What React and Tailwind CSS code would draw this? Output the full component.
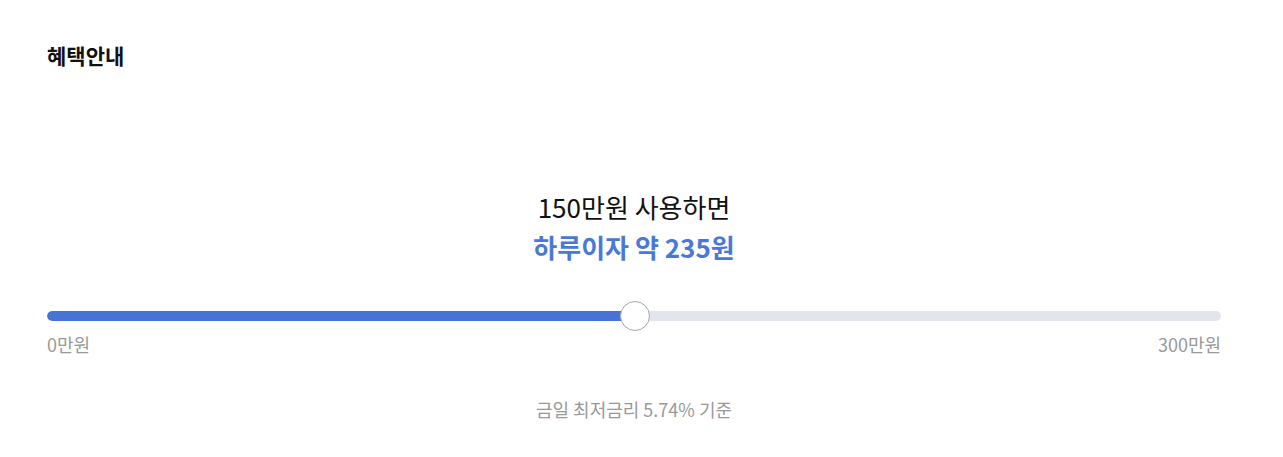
export default function App() {
  const pct = 50;
  return (
    <div className="w-[1283px] h-[457px] bg-white" style={{ fontFamily: '"Noto Sans CJK KR", "Noto Sans", sans-serif' }}>
      <div className="pl-[47px] pr-[62px] pt-[40px]">
        <h2 className="text-[21px] leading-[30px] font-bold text-[#111]">혜택안내</h2>
        <div className="mt-[117px] flex flex-col items-center">
          <p className="text-[26px] leading-[40px] text-[#111]">150만원 사용하면</p>
          <p className="text-[26px] leading-[40px] font-bold text-[#4a78d6]">하루이자 약 235원</p>
        </div>
        <div className="mt-[34px] relative h-[30px] flex items-center">
          <div className="w-full h-[10px] rounded-full bg-[#e2e5ec] overflow-hidden">
            <div className="h-full bg-[#4673d4] rounded-full" style={{ width: `${pct}%` }} />
          </div>
          <div
            className="absolute top-0 w-[30px] h-[30px] rounded-full bg-white border border-[#9ea7b6] -translate-x-1/2"
            style={{ left: `calc(${pct}% + 1px)` }}
          />
        </div>
        <div className="flex justify-between text-[18px] leading-[26px] text-[#999]">
          <span>0만원</span>
          <span>300만원</span>
        </div>
        <p className="text-center text-[18px] leading-[24px] text-[#999] mt-[40px]">금일 최저금리 5.74% 기준</p>
      </div>
    </div>
  );
}
